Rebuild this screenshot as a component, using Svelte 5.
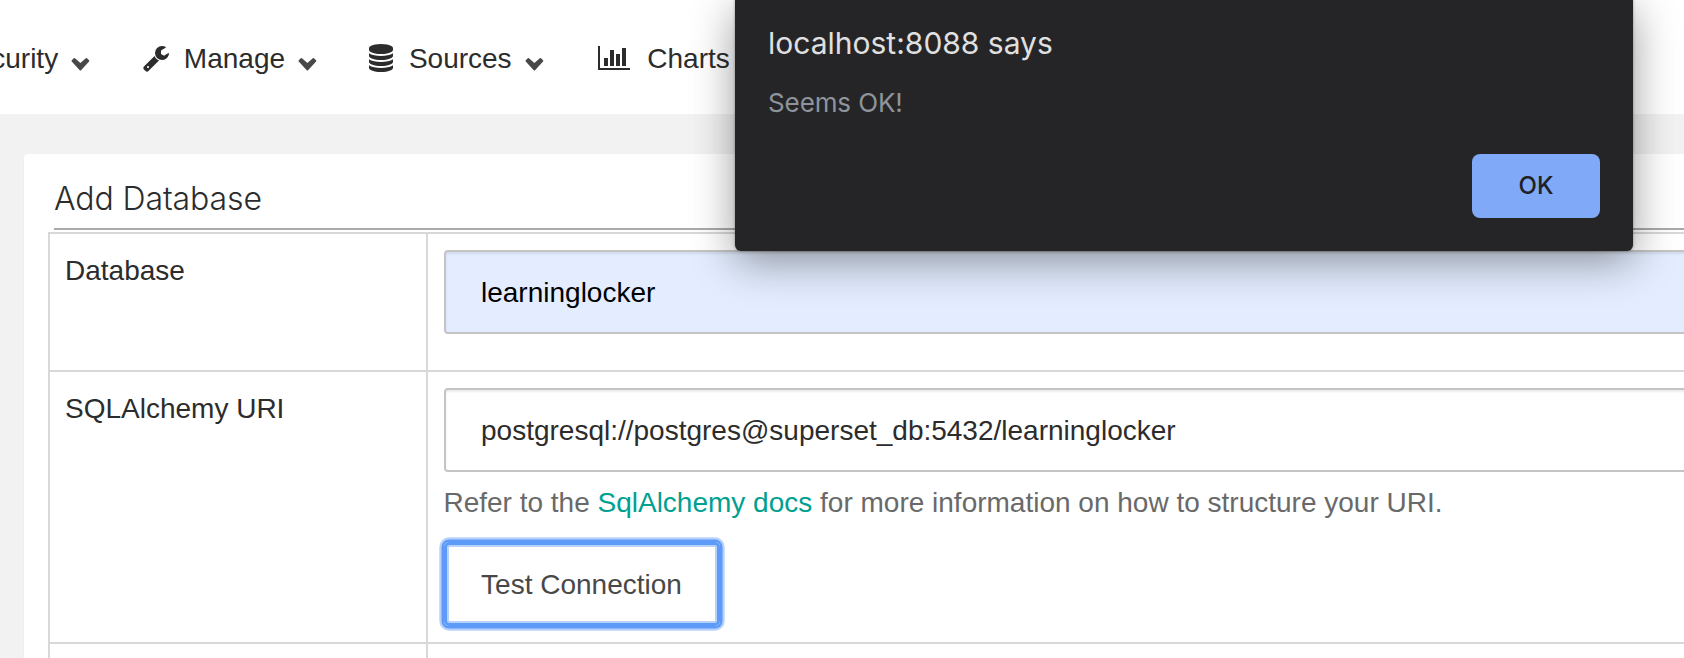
<script>
  const wrench = 'M384 1472q0-26-19-45t-45-19-45 19-19 45 19 45 45 19 45-19 19-45zm644-420l-682 682q-37 37-90 37-52 0-91-37l-106-108q-38-36-38-90 0-53 38-91l681-681q39 98 114.5 173.5t173.5 114.5zm634-435q0 39-23 106-47 134-164.5 217.5t-258.5 83.5q-185 0-316.5-131.5t-131.5-316.5 131.5-316.5 316.5-131.5q58 0 121.5 16.5t107.5 46.5q16 11 16 28t-16 28l-293 169v224l193 107q5-3 79-48.5t135.5-81 70.5-35.5q15 0 23.5 10t8.5 25z';
  const database = 'M768 768q237 0 443-43t325-127v170q0 69-103 128t-280 93.5-385 34.5-385-34.5-280-93.5-103-128v-170q119 84 325 127t443 43zm0 768q237 0 443-43t325-127v170q0 69-103 128t-280 93.5-385 34.5-385-34.5-280-93.5-103-128v-170q119 84 325 127t443 43zm0-384q237 0 443-43t325-127v170q0 69-103 128t-280 93.5-385 34.5-385-34.5-280-93.5-103-128v-170q119 84 325 127t443 43zm0-1152q208 0 385 34.5t280 93.5 103 128v128q0 69-103 128t-280 93.5-385 34.5-385-34.5-280-93.5-103-128v-128q0-69 103-128t280-93.5 385-34.5z';
  const chart = 'M640 896v512H384V896zM1024 384v1024H768V384zM2048 1536v128H0V128h128v1408zM1408 640v768h-256V640zM1792 256v1152h-256V256z';
</script>

{#snippet chevron()}
  <svg class="chevron" width="19" height="14" viewBox="0 0 19 14">
    <path d="M3.4 1.9 9.4 7.2 15.4 1.9 17.4 3.9 9.4 12.6 1.4 3.9z" />
  </svg>
{/snippet}

<div class="page">
  <nav>
    <div class="item security"><span>Security</span>{@render chevron()}</div>
    <div class="item manage">
      <svg class="icon" width="26" height="28" viewBox="0 0 1664 1792"><path d={wrench} /></svg>
      <span>Manage</span>{@render chevron()}
    </div>
    <div class="item sources">
      <svg class="icon" width="24" height="28" viewBox="0 0 1536 1792"><path d={database} /></svg>
      <span>Sources</span>{@render chevron()}
    </div>
    <div class="item charts">
      <svg class="icon" width="32" height="28" viewBox="0 0 2048 1792"><path d={chart} /></svg>
      <span>Charts</span>
    </div>
  </nav>

  <main>
    <h1>Add Database</h1>
    <div class="table">
      <div class="row first">
        <div class="label">Database</div>
        <div class="cell"><div class="input filled"><span>learninglocker</span></div></div>
      </div>
      <div class="row second">
        <div class="label uri">SQLAlchemy URI</div>
        <div class="cell">
          <div class="input"><span class="value">postgresql://postgres@superset_db:5432/learninglocker</span></div>
          <p>Refer to the <a href="#docs">SqlAlchemy docs</a> for more information on how to structure your URI.</p>
          <button class="test">Test Connection</button>
        </div>
      </div>
      <div class="row third"><div class="label"></div><div class="cell"></div></div>
    </div>
  </main>

  <div class="dialog">
    <div class="origin">localhost:8088 says</div>
    <div class="message">Seems OK!</div>
    <button class="ok">OK</button>
  </div>
</div>

<style>
  :global(body) { margin: 0; overflow: hidden; }
  .page {
    position: relative;
    width: 1684px;
    height: 658px;
    overflow: hidden;
    box-sizing: border-box;
    background: #f2f2f2;
    color: #2c2c2c;
    font: 28px/40px "Liberation Sans", Arial, sans-serif;
  }
  nav {
    display: flex;
    height: 114px;
    box-sizing: border-box;
    padding-top: 39px;
    background: #fff;
    white-space: nowrap;
  }
  .item { display: flex; flex: none; align-items: flex-start; height: 40px; }
  .security { margin-left: -43px; }
  .manage { margin-left: 52.5px; }
  .sources { margin-left: 51.7px; }
  .charts { margin-left: 54.3px; }
  .icon { display: block; margin-top: 5px; fill: #2c2c2c; flex: none; }
  .manage .icon + span { margin-left: 15.2px; }
  .sources .icon + span { margin-left: 16.2px; }
  .charts .icon + span { margin-left: 17.4px; }
  .chevron {
    display: block;
    flex: none;
    margin: 18px 0 0 13px;
    fill: #484848;
    stroke: #484848;
    stroke-width: 1.8;
    stroke-linejoin: round;
  }
  main {
    box-sizing: border-box;
    width: 1700px;
    height: 560px;
    margin: 40px 0 0 24px;
    padding: 24px 0 0 24px;
    background: #fff;
    border-radius: 4px;
    box-shadow: 0 1px 2px rgba(0, 0, 0, 0.06);
  }
  h1 {
    box-sizing: border-box;
    height: 52px;
    margin: 0 0 2px 6px;
    padding-top: 1px;
    border-bottom: 2px solid #a9a9a9;
    font: 300 32px/40px Inter, "Liberation Sans", sans-serif;
    letter-spacing: -0.1px;
  }
  .table { border: solid #d8d8d8; border-width: 2px 0 0 2px; }
  .row { display: flex; box-sizing: border-box; border-bottom: 2px solid #d8d8d8; }
  .first { height: 138px; }
  .second { height: 272px; }
  .third { height: 80px; }
  .label {
    flex: none;
    box-sizing: border-box;
    width: 378px;
    padding: 17px 15px;
    border-right: 2px solid #d8d8d8;
  }
  .cell { flex: 1; padding: 16px; }
  .input {
    box-sizing: border-box;
    height: 84px;
    padding: 21px 35px;
    border: 2px solid #c4c4c4;
    border-radius: 4px;
    box-shadow: inset 0 2px 2px rgba(0, 0, 0, 0.075);
    background: #fff;
  }
  .filled { background: #e3edff; color: #000; }
  p { margin: 11px 0 19px -0.6px; color: #696969; white-space: nowrap; }
  a { color: #00a091; text-decoration: none; }
  button { font: inherit; border: 0; margin: 0; }
  .test {
    display: block;
    box-sizing: border-box;
    width: 276px;
    height: 84px;
    padding: 1px 1px 0 0;
    color: #484848;
    background: #fff;
    border-radius: 5px;
    box-shadow: inset 0 0 0 3px #5e9bf8, inset 0 0 0 5px #b7d1fb, 0 0 0 2.5px #5e9bf8, 0 0 0 4.7px #b7d1fb;
  }
  .dialog {
    position: absolute;
    top: 0;
    left: 735px;
    display: flex;
    flex-direction: column;
    box-sizing: border-box;
    width: 898px;
    height: 251px;
    padding: 23px 33px 33px;
    background: #252527;
    border-radius: 0 0 6px 6px;
    box-shadow: 0 0 3px rgba(0, 0, 0, 0.35), 0 10px 44px rgba(0, 0, 0, 0.4);
    font-family: Inter, sans-serif;
  }
  .origin { font-size: 30px; color: #e0e0e0; }
  .message { margin-top: 20px; font-size: 26px; letter-spacing: -0.1px; color: #8e949b; }
  .ok {
    align-self: flex-end;
    width: 128px;
    height: 64px;
    margin-top: auto;
    padding: 0;
    background: #80aaf7;
    border-radius: 8px;
    color: #202124;
    font-size: 24px;
    font-weight: 500;
  }
</style>
